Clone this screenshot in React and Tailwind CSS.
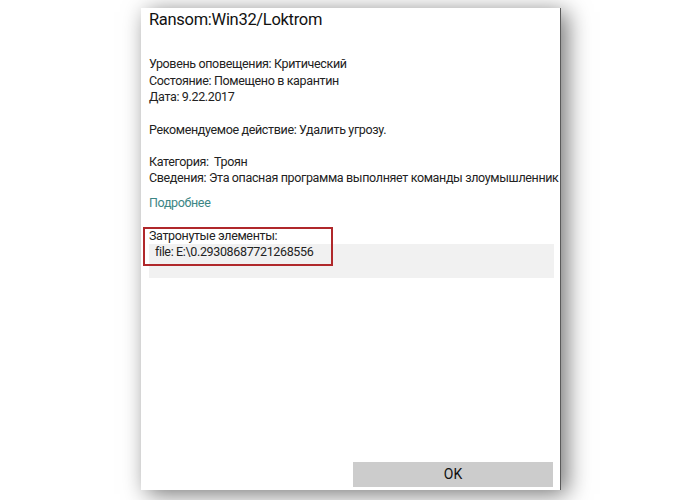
import React from 'react';

const font = { fontFamily: 'Roboto, "Open Sans", "DejaVu Sans", sans-serif' };

const App = () => {
    return (
        <div className="w-[700px] h-[500px] bg-white overflow-hidden pl-[141px] pt-[8px]" style={font}>
            <div className="relative w-[420px] h-[482px] bg-white border-r border-[#5a5a5a] shadow-[6px_4px_22px_rgba(0,0,0,0.55)] flex flex-col pl-[8px] pr-[6px]">
                {/* Title */}
                <h1 className="text-[16.5px] leading-[24px] tracking-[-0.3px] text-[#111]">Ransom:Win32/Loktrom</h1>

                <div className="mt-[24px] text-[12.5px] leading-[16.5px] tracking-[-0.35px] text-[#222]">
                    <p>Уровень оповещения: Критический</p>
                    <p>Состояние: Помещено в карантин</p>
                    <p>Дата: 9.22.2017</p>
                </div>

                <p className="mt-[16px] text-[12.5px] leading-[16.5px] tracking-[-0.35px] text-[#222]">Рекомендуемое действие: Удалить угрозу.</p>

                <div className="mt-[15.5px] text-[12.5px] leading-[16.5px] tracking-[-0.35px] text-[#222]">
                    <p>Категория:&nbsp; Троян</p>
                    <p className="whitespace-nowrap">Сведения: Эта опасная программа выполняет команды злоумышленник</p>
                </div>

                <p className="mt-[8px] text-[12.5px] leading-[16.5px] tracking-[-0.35px] text-[#3b8585]">Подробнее</p>

                {/* Affected items */}
                <div className="relative mt-[17px] text-[12.5px] leading-[16.5px] tracking-[-0.35px] text-[#222]">
                    <p>Затронутые элементы:</p>
                    <div className="bg-[#f1f1f1] h-[34px] -mt-[0.5px] pl-[6px]">
                        <p>file: E:\0.29308687721268556</p>
                    </div>
                    <div className="absolute left-[-6px] top-[-1px] w-[190px] h-[39px] border-2 border-[#b0282b] pointer-events-none" />
                </div>

                {/* Footer */}
                <div className="mt-auto mb-[3px] flex justify-end">
                    <button className="w-[200px] h-[25px] bg-[#cccccc] text-[14px] text-[#111] mr-[1px]">OK</button>
                </div>
            </div>
        </div>
    );
};

export default App;
